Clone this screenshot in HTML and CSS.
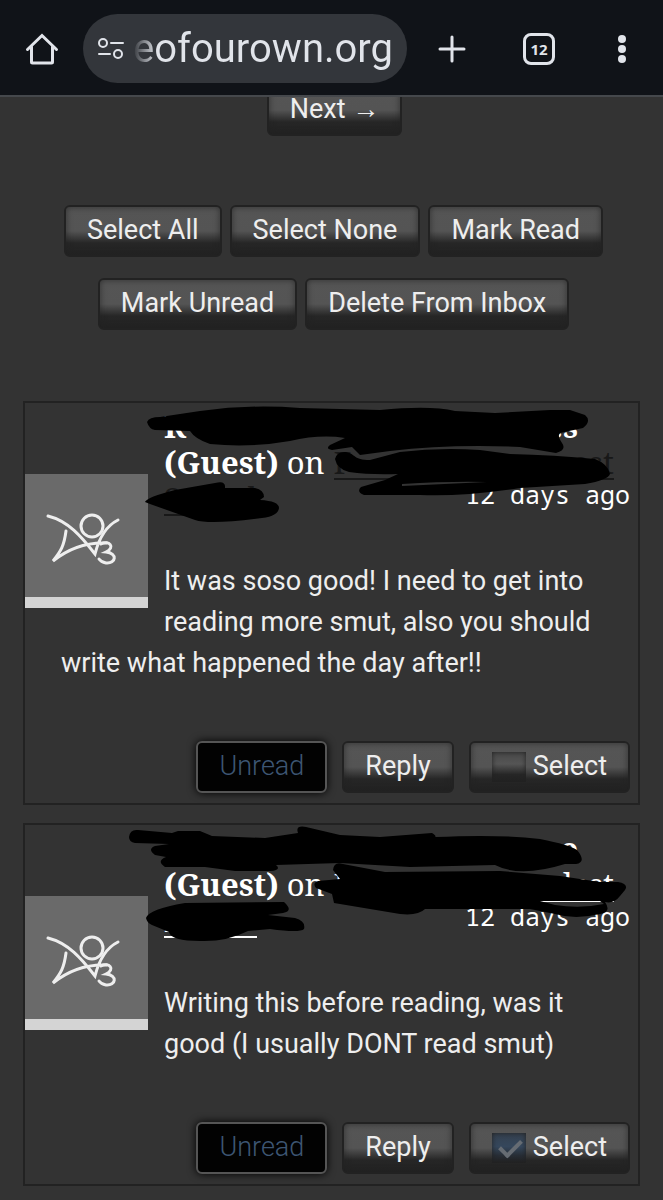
FILE: index.html
```html
<!DOCTYPE html>
<html lang="en">
<head>
    <meta charset="utf-8">
    <meta name="viewport" content="width=device-width, initial-scale=1">
    <title>Inbox</title>
    <link rel="stylesheet" href="styles.css">
</head>
<body>
    <header class="toolbar">
        <button class="tool home" aria-label="Home">
            <svg width="34" height="34" viewBox="0 0 34 34"><path d="M2.500 17.500 17 3.500 31.500 17.500M6.500 14.500V30Q6.500 31 7.500 31H26.500Q27.500 31 27.500 30V14.500"/></svg>
        </button>
        <div class="address">
            <svg width="28" height="24" viewBox="0 0 28 24"><circle cx="6" cy="6" r="4"/><circle cx="21" cy="17" r="4"/><path d="M14 6H26M2 17H13"/></svg>
            <span class="url">eofourown.org</span>
        </div>
        <button class="tool add" aria-label="New tab">
            <svg width="30" height="30" viewBox="0 0 30 30"><path d="M15 3V27M3 15H27"/></svg>
        </button>
        <button class="tool tabs" aria-label="Tabs"><span>12</span></button>
        <button class="tool menu" aria-label="Menu">
            <svg width="8" height="30" viewBox="0 0 8 30"><circle cx="4" cy="5" r="4"/><circle cx="4" cy="15" r="4"/><circle cx="4" cy="25" r="4"/></svg>
        </button>
    </header>

    <main>
        <nav class="pager"><a class="btn" href="#">Next →</a></nav>

        <div class="bulk">
            <button class="btn">Select All</button>
            <button class="btn">Select None</button>
            <button class="btn">Mark Read</button>
            <button class="btn">Mark Unread</button>
            <button class="btn">Delete From Inbox</button>
        </div>

        <article class="comment">
            <div class="avatar">
                <svg viewBox="0 0 123 123"><path d="M23 42C43 47 56 62 70 80C74 64 81 52 93 46M41 57C39 72 36 77 28 87C44 74 62 68 82 69"/><circle cx="67" cy="52" r="11"/><path d="M76 70C84 66 91 73 81 78C93 79 91 90 81 89Q76 88 74 85"/></svg>
            </div>
            <h4>
                <strong class="name"><span>R</span><span>es</span></strong>
                <span class="subject"><span><strong>(Guest)</strong> on</span> <a class="visited" href="#"><span>F</span><span>est</span></a></span>
                <span class="last"><a class="visited" href="#"><span>S</span><span>d</span></a><time>12 days ago</time></span>
            </h4>
            <svg class="marks" width="612" height="130" viewBox="25 403 612 130">
                <path d="M147 422Q149 417 160 417L200 411Q250 404 300 408L380 410Q430 405 455 411L495 413 550 410H570L585 415Q592 421 583 428L560 433Q557 436 562 443T556 453L520 447Q450 444 390 451L360 455 352 447 332 450Q325 449 330 445L345 438Q320 434 290 441 250 448 210 444 195 439 190 431L155 430Q149 429 147 422Z"/>
                <path fill-rule="evenodd" d="M335 459Q337 451 346 452C356 454 353 460 370 460L400 452Q440 447 480 450L510 454Q555 455 595 459 608 464 610 474 608 480 585 484L520 488Q460 497 420 495H364Q356 492 361 487L385 480 398 474Q370 475 349 472 337 469 335 459ZM402 484Q450 481 487 482L402 486Z"/>
                <path d="M145 502Q147 497 175 490L215 483Q226 480 225 488H255Q264 490 264 497L260 500Q279 501 279 508 278 516 262 518 210 525 195 520L150 504Z"/>
            </svg>
            <p>It was soso good! I need to get into reading more smut, also you should write what happened the day after!!</p>
            <div class="actions">
                <span class="btn unread">Unread</span>
                <button class="btn">Reply</button>
                <label class="btn"><input type="checkbox">Select</label>
            </div>
        </article>

        <article class="comment">
            <div class="avatar">
                <svg viewBox="0 0 123 123"><path d="M23 42C43 47 56 62 70 80C74 64 81 52 93 46M41 57C39 72 36 77 28 87C44 74 62 68 82 69"/><circle cx="67" cy="52" r="11"/><path d="M76 70C84 66 91 73 81 78C93 79 91 90 81 89Q76 88 74 85"/></svg>
            </div>
            <h4>
                <strong class="name"><span></span><span>e</span></strong>
                <span class="subject"><span><strong>(Guest)</strong> on</span> <a href="#"><span>F</span><span>lest</span></a></span>
                <span class="last"><a href="#"><span>f</span><span></span></a><time>12 days ago</time></span>
            </h4>
            <svg class="marks" width="612" height="130" viewBox="25 825 612 130">
                <path d="M129 837Q130 829 138 830L172 833 178 831H200L212 836 265 838 298 833Q295 825 306 827L340 835 380 837 432 833Q437 836 435 837 500 834 540 839 570 845 577 850 587 862 576 864H565Q520 878 495 865L410 867 340 863 276 865Q282 870 270 871H235L205 867H165Q156 861 166 857L155 855Q147 849 155 846L169 844 135 843Q129 842 129 837Z"/>
                <path fill-rule="evenodd" d="M333 870Q334 861 343 864L385 872 500 871 560 876 600 882H618Q629 884 625 890L620 896Q614 904 605 902 612 912 600 914 575 920 555 914L530 909H425Q418 916 400 914L334 903 332 894 316 888Q312 883 318 881L340 879ZM540 901H600L604 904Q580 909 555 905Z"/>
                <path d="M146 918Q149 909 185 903L284 902Q294 911 283 913L268 915 295 918Q306 921 304 929 300 933 270 929L248 931Q226 942 200 941 171 941 169 932L152 925Q147 923 146 918Z"/>
            </svg>
            <p>Writing this before reading, was it good (I usually DONT read smut)</p>
            <div class="actions">
                <span class="btn unread">Unread</span>
                <button class="btn">Reply</button>
                <label class="btn"><input type="checkbox" checked>Select</label>
            </div>
        </article>
    </main>
</body>
</html>
```
FILE: styles.css
```css
* {
    box-sizing: border-box;
}
body {
    margin: 0;
    background: #333;
    color: #eee;
    font: 27px/41px Roboto, sans-serif;
}
svg {
    fill: none;
    stroke: #e1e4ea;
    stroke-width: 3;
    stroke-linecap: round;
}

/* browser toolbar */
.toolbar {
    position: relative;
    z-index: 1;
    display: flex;
    align-items: center;
    height: 97px;
    padding-top: 2px;
    background: #101318;
    border-bottom: 2px solid #45484c;
}
.tool {
    display: flex;
    flex-shrink: 0;
    justify-content: center;
    padding: 0;
    border: 0;
    background: none;
    color: #e1e4ea;
}
.home {
    width: 83px;
}
.add {
    width: 90px;
}
.tabs {
    width: 84px;
}
.menu {
    width: 82px;
}
.menu svg {
    fill: #e1e4ea;
    stroke: none;
}
.tabs span {
    width: 32px;
    height: 32px;
    border: 3px solid #e1e4ea;
    border-radius: 8px;
    font: bold 15px/26px "Open Sans", sans-serif;
}
.address {
    flex: 1;
    min-width: 0;
    display: flex;
    align-items: center;
    justify-content: space-between;
    height: 69px;
    padding: 0 14px;
    border-radius: 35px;
    background: #33363b;
}
.address svg {
    flex-shrink: 0;
    stroke-width: 2;
}
.url {
    font-size: 40px;
    line-height: 56px;
    background: linear-gradient(to right, #33363b, #e1e4ea 24px);
    background-clip: text;
    -webkit-background-clip: text;
    color: transparent;
}

/* buttons */
.btn {
    display: inline-flex;
    align-items: center;
    height: 52px;
    padding: 0 21px 1px;
    border: 2px solid #222;
    border-radius: 6px;
    background: linear-gradient(#555 0%, #545454 50%, #262626 75%, #222 100%);
    box-shadow: inset 0 0 6px rgba(34, 34, 34, 0.7);
    color: #eee;
    font: 27px/41px Roboto, sans-serif;
    text-decoration: none;
}
.btn.unread {
    background: #020202;
    border-color: #555;
    box-shadow: 0 0 8px #000;
    color: #3d5673;
    font-weight: 300;
}
.btn input {
    appearance: none;
    width: 34px;
    height: 30px;
    margin: 0 7px 0 0;
    background: linear-gradient(#484848, #555 40%, #262626 75%, #222);
    box-shadow: inset 0 0 5px #222;
}
.btn input:checked {
    background: linear-gradient(#34404e, #35475c 45%, #272d35 75%, #222);
}
.btn input:checked::before {
    content: "";
    display: block;
    width: 9px;
    height: 18px;
    margin: 2px 12px;
    border: solid #666c73;
    border-width: 0 4px 4px 0;
    transform: rotate(45deg);
}

main {
    padding: 0 23px;
}
.pager {
    display: flex;
    justify-content: center;
    margin-top: -13px;
    padding-left: 6px;
}
.bulk {
    display: flex;
    flex-wrap: wrap;
    justify-content: center;
    gap: 21px 8px;
    margin: 69px 24px 71px 28px;
}

/* inbox comments */
.comment {
    position: relative;
    margin-bottom: 18px;
    padding: 5px 8px 10px 0;
    border: 2px solid #222;
}
.avatar {
    float: left;
    width: 123px;
    margin: 66px 16px 0 0;
    border-bottom: 11px solid #d4d4d4;
    background: #6a6a6a;
}
.avatar svg {
    display: block;
    stroke: #eee;
}
.comment h4 {
    margin: 0 0 45px;
    color: #fff;
    font: 31px/36px "Noto Serif", "DejaVu Serif Condensed", "DejaVu Serif", serif;
}
.name,
.subject,
.last,
.comment a {
    display: flex;
    justify-content: space-between;
}
.name {
    margin-right: 52px;
}
.subject {
    gap: 9px;
    margin-right: 16px;
}
.comment a {
    flex: 1;
    height: 36px;
    border-bottom: 2px solid;
    color: #fff;
    text-decoration: none;
}
.comment a.visited {
    color: #181818;
}
.last a {
    flex: none;
    width: 93px;
}
.comment time {
    font: 25px/28px "Noto Sans Mono", "DejaVu Sans Mono", monospace;
}
.marks {
    position: absolute;
    top: 0;
    left: 0;
    fill: #000;
    stroke: none;
}
.comment p {
    margin: 0 20px 57px 36px;
}
.actions {
    clear: both;
    display: flex;
    justify-content: flex-end;
    gap: 15px;
}
```
